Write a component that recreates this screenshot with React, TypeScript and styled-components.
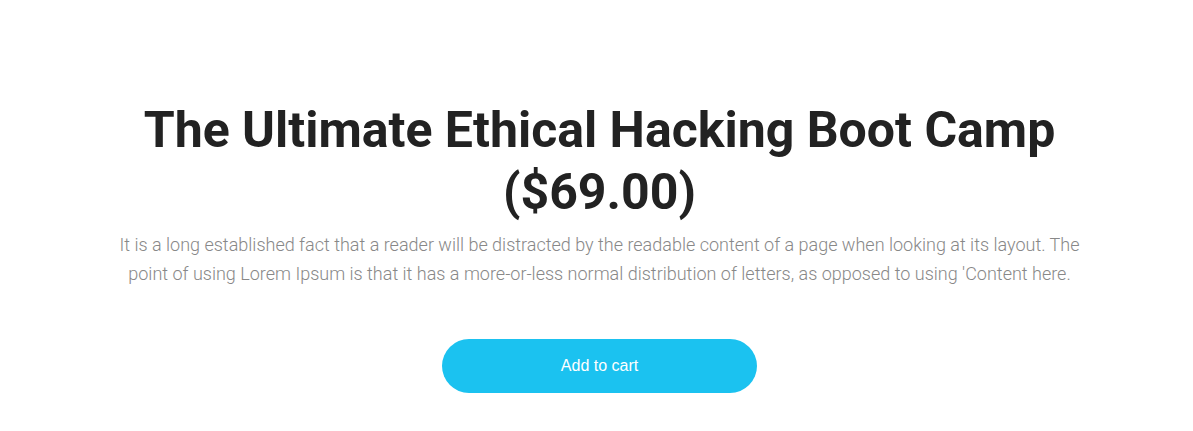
import React from "react";
import styled, { createGlobalStyle } from "styled-components";

const Global = createGlobalStyle`
  html, body { margin: 0; padding: 0; background: #ffffff; }
  body { font-family: Roboto, "Noto Sans", sans-serif; }
`;

const Section = styled.section`
  display: flex;
  justify-content: center;
  padding: 99px 0 0 6px;
`;

const Container = styled.div`
  width: 980px;
  display: flex;
  flex-direction: column;
  align-items: center;
  text-align: center;
`;

const Title = styled.h1`
  margin: 0;
  font-family: Roboto, sans-serif;
  font-weight: 700;
  font-size: 50px;
  line-height: 62px;
  color: #222222;
`;

const Text = styled.p`
  margin: 7px 0 0;
  font-family: Roboto, sans-serif;
  font-weight: 300;
  font-size: 18px;
  line-height: 29px;
  color: #888888;
`;

const CartButton = styled.button`
  margin-top: 51px;
  width: 315px;
  height: 54px;
  border: none;
  border-radius: 27px;
  background: #1bc2f0;
  color: #ffffff;
  font-family: "Liberation Sans", Arial, sans-serif;
  font-size: 16px;
  cursor: pointer;
`;

export default function App() {
  return (
    <>
      <Global />
      <Section>
        <Container>
          <Title>The Ultimate Ethical Hacking Boot Camp ($69.00)</Title>
          <Text>
            It is a long established fact that a reader will be distracted by the readable content of a page when looking at its layout. The point of using Lorem Ipsum is that it has a more-or-less normal distribution of letters, as opposed to using 'Content here.
          </Text>
          <CartButton>Add to cart</CartButton>
        </Container>
      </Section>
    </>
  );
}
